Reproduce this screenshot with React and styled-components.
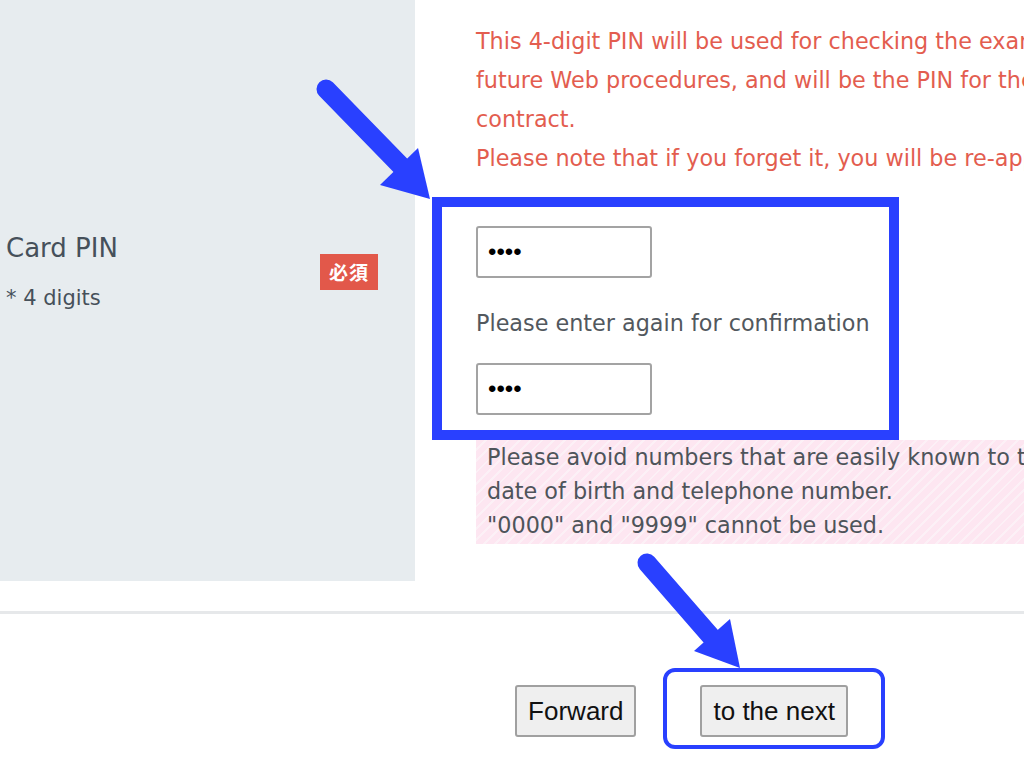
import React from "react";
import styled, { createGlobalStyle } from "styled-components";

const GlobalStyle = createGlobalStyle`
  html, body { margin: 0; padding: 0; background: #ffffff; }
  body { font-family: "DejaVu Sans", Verdana, sans-serif; overflow: hidden; }
`;

const Page = styled.div`
  position: relative;
  width: 1024px;
  height: 759px;
  overflow: hidden;
  background: #ffffff;
`;

const FormRow = styled.div`
  display: grid;
  grid-template-columns: 415px 1fr;
  min-width: 0;
`;

const HeaderCell = styled.div`
  background: #e7ecef;
  display: flex;
  align-items: center;
  justify-content: space-between;
  padding: 0 37px 38px 6px;
`;

const LabelGroup = styled.div`
  display: flex;
  flex-direction: column;
  gap: 21px;
`;

const FieldName = styled.div`
  font-size: 26px;
  line-height: 32px;
  color: #46505a;
`;

const FieldHint = styled.div`
  font-size: 21px;
  line-height: 26px;
  color: #46505a;
`;

const RequiredBadge = styled.span`
  display: inline-flex;
  align-items: center;
  justify-content: center;
  width: 58px;
  height: 36px;
  background: #e2584a;
  color: #ffffff;
  font-family: "Noto Sans CJK JP", "Noto Sans CJK SC", sans-serif;
  font-weight: 700;
  font-size: 19px;
  letter-spacing: 1px;
`;

const BodyCell = styled.div`
  padding: 22px 0 37px 61px;
  min-width: 0;
  overflow: hidden;
`;

const Notice = styled.p`
  margin: 0;
  font-size: 22.3px;
  line-height: 39px;
  color: #e35d4f;
  white-space: nowrap;
`;

const InputGroup = styled.div`
  position: relative;
  margin-top: 48px;
  display: flex;
  flex-direction: column;
  align-items: flex-start;

  &::before {
    content: "";
    position: absolute;
    top: -29px;
    left: -44px;
    width: 467px;
    height: 243px;
    box-sizing: border-box;
    border: 10px solid #2940ff;
    pointer-events: none;
  }
`;

const PinInput = styled.input`
  box-sizing: border-box;
  width: 176px;
  height: 52px;
  padding: 0 10px;
  border: 2px solid #a3a3a3;
  border-radius: 3px;
  background: #ffffff;
  font-family: "Liberation Sans", Arial, sans-serif;
  font-size: 24px;
  color: #000000;
  outline: none;
`;

const ConfirmLabel = styled.div`
  font-size: 22.3px;
  line-height: 39px;
  color: #52585e;
  padding: 26px 0 20px;
  white-space: nowrap;
`;

const CautionBox = styled.div`
  margin-top: 25px;
  width: 700px;
  padding: 0 0 2px 11px;
  font-size: 22.3px;
  line-height: 34px;
  color: #4e545a;
  white-space: nowrap;
  background-color: #fde6f1;
  background-image: repeating-linear-gradient(
    135deg,
    #fde6f1 0px,
    #fde6f1 6px,
    #fcf0f6 6px,
    #fcf0f6 8px
  );
`;

const Divider = styled.hr`
  margin: 30px 0 0;
  border: 0;
  height: 3px;
  background: #e6e8ea;
`;

const ButtonBar = styled.div`
  display: flex;
  justify-content: center;
  align-items: center;
  gap: 64px;
  padding: 71px 0 0 339px;
`;

const NextWrap = styled.div`
  position: relative;

  &::after {
    content: "";
    position: absolute;
    top: -17px;
    left: -37px;
    right: -37px;
    bottom: -12px;
    border: 4px solid #2940ff;
    border-radius: 12px;
    pointer-events: none;
  }
`;

const NavButton = styled.button`
  box-sizing: border-box;
  height: 52px;
  padding: 0 11px;
  background: #efefef;
  border: 2px solid #a0a0a0;
  border-radius: 3px;
  font-family: "Liberation Sans", Arial, sans-serif;
  font-size: 26px;
  color: #111111;
  cursor: pointer;
`;

const Overlay = styled.svg`
  position: absolute;
  top: 0;
  left: 0;
  width: 1024px;
  height: 759px;
  pointer-events: none;
`;

const ARROW = "#2940ff";

function Arrow({ tail, end, head }) {
  return (
    <g>
      <line
        x1={tail[0]}
        y1={tail[1]}
        x2={end[0]}
        y2={end[1]}
        stroke={ARROW}
        strokeWidth="19"
        strokeLinecap="round"
      />
      <polygon points={head.map((p) => p.join(",")).join(" ")} fill={ARROW} />
    </g>
  );
}

export default function App() {
  return (
    <>
      <GlobalStyle />
      <Page>
        <FormRow>
          <HeaderCell>
            <LabelGroup>
              <FieldName>Card PIN</FieldName>
              <FieldHint>* 4 digits</FieldHint>
            </LabelGroup>
            <RequiredBadge>必須</RequiredBadge>
          </HeaderCell>
          <BodyCell>
            <Notice>
              This 4-digit PIN will be used for checking the examination results in
              <br />
              future Web procedures, and will be the PIN for the card after the
              <br />
              contract.
              <br />
              Please note that if you forget it, you will be re-applied.
            </Notice>
            <InputGroup>
              <PinInput type="password" defaultValue="1234" readOnly />
              <ConfirmLabel>Please enter again for confirmation</ConfirmLabel>
              <PinInput type="password" defaultValue="1234" readOnly />
            </InputGroup>
            <CautionBox>
              Please avoid numbers that are easily known to third parties, such as
              <br />
              date of birth and telephone number.
              <br />
              "0000" and "9999" cannot be used.
            </CautionBox>
          </BodyCell>
        </FormRow>
        <Divider />
        <ButtonBar>
          <NavButton type="button">Forward</NavButton>
          <NextWrap>
            <NavButton type="button">to the next</NavButton>
          </NextWrap>
        </ButtonBar>
        <Overlay viewBox="0 0 1024 759">
          <Arrow
            tail={[326, 89]}
            end={[402, 167]}
            head={[
              [380, 185],
              [418, 148],
              [430, 199],
            ]}
          />
          <Arrow
            tail={[647, 563]}
            end={[714, 640]}
            head={[
              [694, 651],
              [730, 619],
              [740, 668],
            ]}
          />
        </Overlay>
      </Page>
    </>
  );
}
